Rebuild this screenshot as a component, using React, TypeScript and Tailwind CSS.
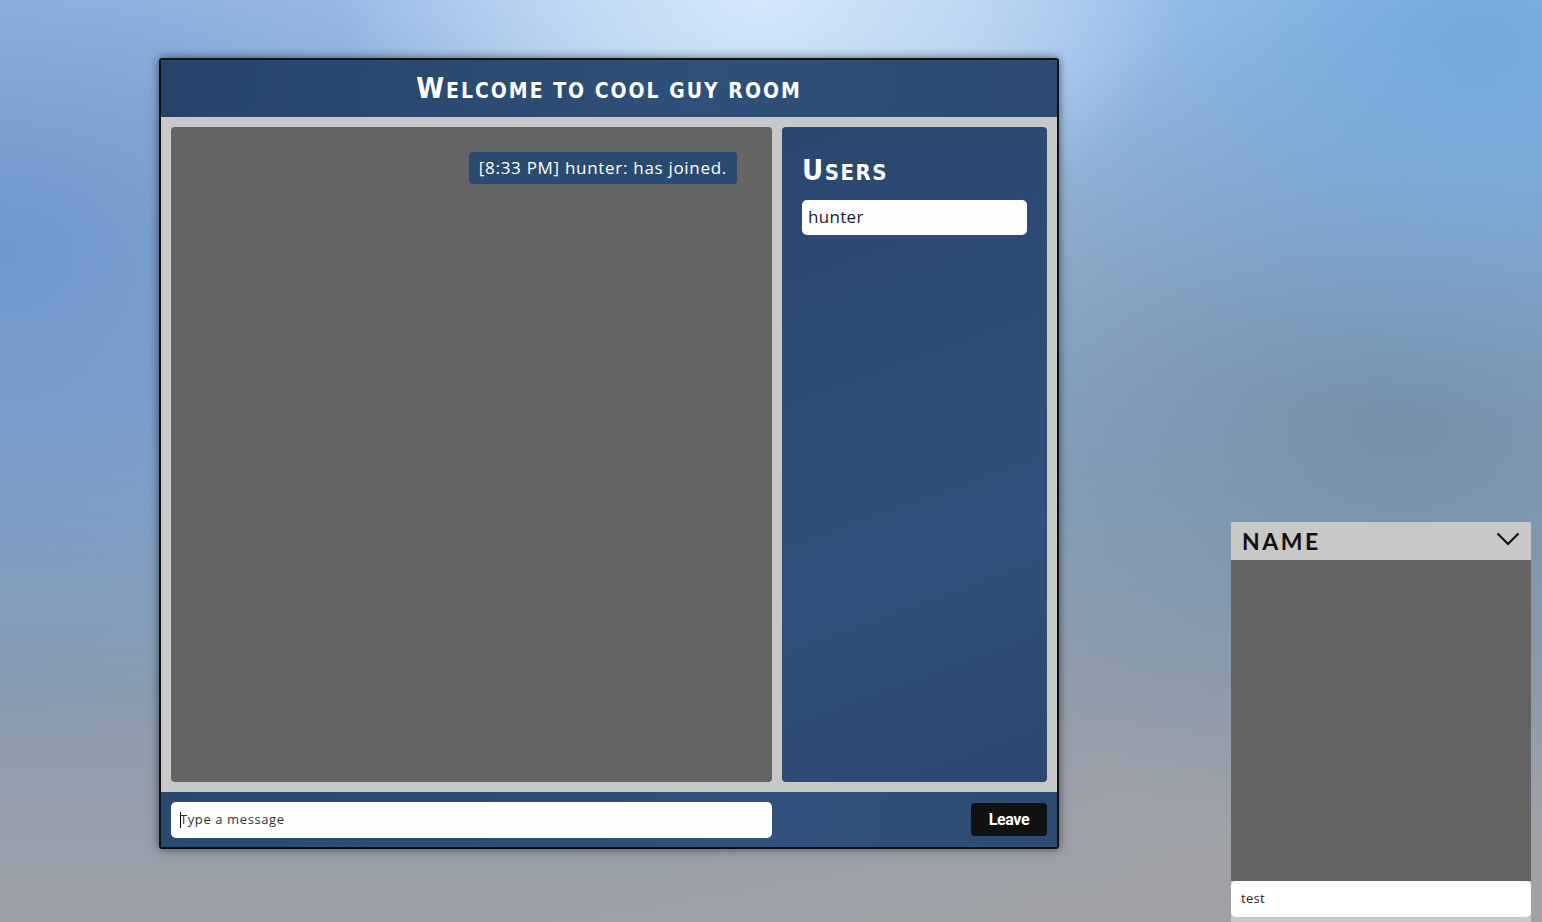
const TITLE_FONT = "font-['DejaVu_Sans_Condensed','DejaVu_Sans',sans-serif]"
const BODY_FONT = "font-['Open_Sans','Noto_Sans',sans-serif]"

function SmallCaps({ first, rest, big, small }: { first: string; rest: string; big: string; small: string }) {
  return (
    <>
      <span className={big}>{first}</span>
      <span className={small}>{rest}</span>
    </>
  )
}

function ChatWindow() {
  return (
    <div className="flex h-[791px] w-[900px] flex-col overflow-hidden rounded-[3px] border-2 border-[#111] shadow-[0_0_10px_rgba(0,0,0,0.55)]">
      {/* header */}
      <div className="flex h-[57px] items-center justify-center bg-[linear-gradient(100deg,#26446a,#2f5078_60%,#2d4b70)]">
        <h1 className={`${TITLE_FONT} font-semibold tracking-[2px] text-white`}>
          <SmallCaps
            first="W"
            rest="ELCOME TO COOL GUY ROOM"
            big="text-[28px]"
            small="text-[21px]"
          />
        </h1>
      </div>

      {/* body */}
      <div className="flex h-[675px] gap-[10px] bg-[#c8c8c8] p-[10px]">
        <div className="flex w-[601px] flex-col items-end rounded-[4px] bg-[#646464] px-[35px] pt-[25px]">
          <div
            className={`${BODY_FONT} rounded-[4px] bg-[#2b4a70] px-[10px] py-[3px] text-[17px] tracking-[0.7px] text-white`}
          >
            [8:33 PM] hunter: has joined.
          </div>
        </div>
        <div className="flex flex-1 flex-col rounded-[4px] bg-[linear-gradient(160deg,#2a4770,#30517b_65%,#2c4870)] px-[20px] pt-[22px]">
          <h2 className={`${TITLE_FONT} font-semibold tracking-[1.5px] text-white`}>
            <SmallCaps first="U" rest="SERS" big="text-[29px]" small="text-[22px]" />
          </h2>
          <div
            className={`${BODY_FONT} mt-[7px] flex h-[35px] items-center rounded-[5px] bg-white px-[6px] text-[17px] tracking-[0.3px] text-[#1a1a2e]`}
          >
            hunter
          </div>
        </div>
      </div>

      {/* footer */}
      <div className="flex h-[55px] items-center justify-between bg-[linear-gradient(100deg,#2a4770,#31527c_70%,#2d4b72)] px-[10px]">
        <div
          className={`${BODY_FONT} flex h-[36px] w-[601px] items-center rounded-[5px] bg-white px-[9px] text-[13px] tracking-[0.6px] text-[#333]`}
        >
          <span className="mr-[-1px] h-[16px] w-px bg-black" />
          Type a message
        </div>
        <button className="h-[33px] w-[76px] rounded-[4px] bg-[#111] font-['Roboto',sans-serif] text-[16px] font-bold tracking-[-0.4px] text-white">
          Leave
        </button>
      </div>
    </div>
  )
}

function NamePanel() {
  return (
    <div className="flex h-[400px] w-[300px] flex-col bg-[#c8c8c8]">
      <div className="flex h-[38px] items-center justify-between pl-[11px] pr-[11px]">
        <span className="font-['Lato',sans-serif] text-[23px] font-bold tracking-[2.5px] text-[#111]">
          NAME
        </span>
        <svg width="24" height="14" viewBox="0 0 24 14" fill="none" className="mb-[4px]">
          <polyline points="1.5,1.5 12,12 22.5,1.5" stroke="#111" strokeWidth="2.2" />
        </svg>
      </div>
      <div className="flex-1 bg-[#646464]" />
      <div
        className={`${BODY_FONT} flex h-[36px] items-center rounded-[5px] bg-white px-[10px] text-[13px] tracking-[0.3px] text-[#222]`}
      >
        test
      </div>
      <div className="h-[5px]" />
    </div>
  )
}

export default function App() {
  return (
    <div className="relative h-[922px] w-full overflow-hidden bg-[radial-gradient(ellipse_420px_260px_at_760px_0px,#d4e6fa,transparent),radial-gradient(ellipse_520px_380px_at_1480px_40px,#72a8dc,transparent),radial-gradient(ellipse_600px_420px_at_1400px_420px,#7690aa,transparent),radial-gradient(ellipse_700px_500px_at_0px_250px,#6f97cc,transparent),radial-gradient(ellipse_900px_500px_at_1400px_922px,#a2a2a6,transparent),linear-gradient(180deg,#a8c8ee_0%,#8aa8c8_45%,#8c9cae_75%,#9ca0a8_100%)]">
      <div className="flex items-start justify-between pl-[159px] pr-[11px] pt-[58px]">
        <ChatWindow />
        <div className="mt-[464px]">
          <NamePanel />
        </div>
      </div>
    </div>
  )
}
